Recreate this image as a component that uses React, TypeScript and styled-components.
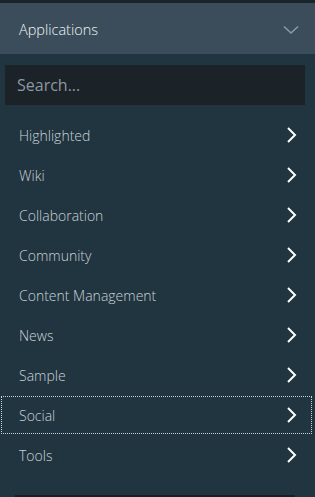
import React from "react";
import styled, { createGlobalStyle } from "styled-components";

const Global = createGlobalStyle`
  html, body { margin: 0; padding: 0; background: #213540; }
  body { font-family: "Open Sans", "Noto Sans", sans-serif; }
  * { box-sizing: border-box; }
`;

const Panel = styled.div`
  width: 315px;
  height: 497px;
  background: #213540;
  border-top: 3px solid #1a252b;
  display: flex;
  flex-direction: column;
  overflow: hidden;
`;

const Header = styled.div`
  height: 51px;
  background: #3b4d5a;
  display: flex;
  align-items: center;
  justify-content: space-between;
  padding: 2px 16px 0 19px;
  color: #f2f5f7;
  font-size: 14.5px;
  font-weight: 300;
`;

const SearchWrap = styled.div`
  padding: 11px 10px 0 5px;
`;

const SearchInput = styled.input`
  width: 300px;
  height: 40px;
  background: #1b2228;
  border: none;
  outline: none;
  padding: 0 12px;
  font-family: "Open Sans", "Noto Sans", sans-serif;
  font-size: 16px;
  font-weight: 400;
  color: #d0d8dc;
  &::placeholder { color: #8b99a3; }
`;

const List = styled.ul`
  list-style: none;
  margin: 10px 0 0;
  padding: 0;
  display: flex;
  flex-direction: column;
`;

const Item = styled.li<{ $focused?: boolean }>`
  height: 40px;
  display: flex;
  align-items: center;
  justify-content: space-between;
  padding: 0 16px 0 19px;
  margin-right: 2px;
  color: #c9d2d7;
  font-size: 14px;
  font-weight: 300;
  outline: ${(p) => (p.$focused ? "1px dotted #c9d2d7" : "none")};
  outline-offset: -2px;
`;

const Footer = styled.div`
  margin: auto 20px 0 15px;
  height: 2px;
  background: #182026;
`;

const ChevronDown = () => (
  <svg width="16" height="10" viewBox="0 0 16 10">
    <path d="M1 1.5 L8 8 L15 1.5" fill="none" stroke="#8a9aa5" strokeWidth="1.6" />
  </svg>
);

const ChevronRight = () => (
  <svg width="11" height="16" viewBox="0 0 11 16">
    <path d="M2 1 L9 8 L2 15" fill="none" stroke="#ffffff" strokeWidth="2" />
  </svg>
);

const items = [
  "Highlighted",
  "Wiki",
  "Collaboration",
  "Community",
  "Content Management",
  "News",
  "Sample",
  "Social",
  "Tools",
];

export default function App() {
  return (
    <>
      <Global />
      <Panel>
        <Header>
          <span>Applications</span>
          <ChevronDown />
        </Header>
        <SearchWrap>
          <SearchInput placeholder="Search..." />
        </SearchWrap>
        <List>
          {items.map((it) => (
            <Item key={it} $focused={it === "Social"}>
              <span>{it}</span>
              <ChevronRight />
            </Item>
          ))}
        </List>
        <Footer />
      </Panel>
    </>
  );
}
